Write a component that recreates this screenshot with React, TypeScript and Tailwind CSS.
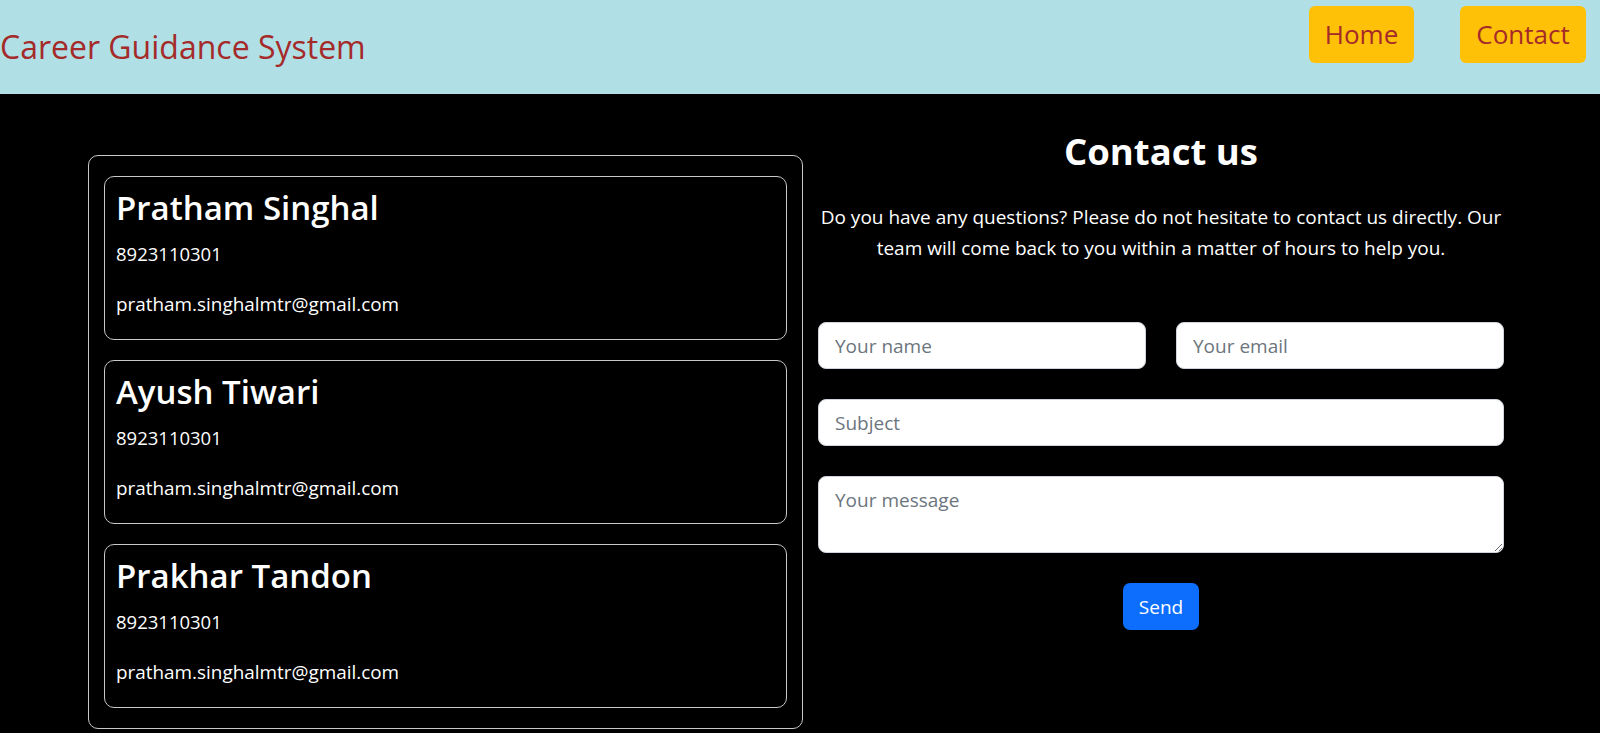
import React from 'react';

interface Member {
  name: string;
  phone: string;
  email: string;
}

const members: Member[] = [
  { name: 'Pratham Singhal', phone: '8923110301', email: 'pratham.singhalmtr@gmail.com' },
  { name: 'Ayush Tiwari', phone: '8923110301', email: 'pratham.singhalmtr@gmail.com' },
  { name: 'Prakhar Tandon', phone: '8923110301', email: 'pratham.singhalmtr@gmail.com' },
];

const MemberCard: React.FC<{ member: Member }> = ({ member }) => (
  <div className="h-[164px] border border-[#c8c8c8] rounded-[10px] px-[11px] pt-[11px] text-white">
    <h2 className="text-[33px] leading-[40px] font-semibold">{member.name}</h2>
    <p className="mt-[12px] text-[18.5px] leading-[28px]">{member.phone}</p>
    <p className="mt-[22px] text-[18.9px] leading-[28px]">{member.email}</p>
  </div>
);

const inputClass =
  'w-full h-[47px] bg-white rounded-[8px] border border-[#ced4da] px-4 text-[19px] text-[#212529] placeholder:text-[#6c757d] outline-none';

const App: React.FC = () => {
  return (
    <div className="min-h-screen bg-black font-['Open_Sans',sans-serif]">
      {/* Navbar */}
      <nav className="h-[94px] bg-[#b0e0e6] flex items-start justify-between">
        <span className="mt-[27px] text-[32px] leading-[40px] text-[#a52a2a]">Career Guidance System</span>
        <div className="flex items-start gap-[46px] mt-[6px] mr-[14px]">
          <button className="w-[105px] h-[57px] rounded-[6px] bg-[#ffc107] text-[#a52a2a] text-[26px]">Home</button>
          <button className="w-[126px] h-[57px] rounded-[6px] bg-[#ffc107] text-[#a52a2a] text-[26px]">Contact</button>
        </div>
      </nav>

      {/* Main */}
      <div className="flex items-start pl-[88px] pb-[5px]">
        {/* Team cards */}
        <div className="mt-[61px] w-[715px] border border-[#c8c8c8] rounded-[10px] px-[15px] py-[20px] flex flex-col gap-[20px]">
          {members.map((m) => (
            <MemberCard key={m.name} member={m} />
          ))}
        </div>

        {/* Contact form */}
        <div className="ml-[15px] w-[686px] mt-[35px] text-white">
          <h2 className="text-center text-[36.5px] leading-[44px] font-bold">Contact us</h2>
          <p className="mt-[29px] text-center text-[19px] leading-[31px]">
            Do you have any questions? Please do not hesitate to contact us directly. Our team will come back to
            you within a matter of hours to help you.
          </p>

          <form className="mt-[58px] flex flex-col gap-[30px]" onSubmit={(e) => e.preventDefault()}>
            <div className="grid grid-cols-2 gap-[30px]">
              <input type="text" placeholder="Your name" className={inputClass} />
              <input type="email" placeholder="Your email" className={inputClass} />
            </div>
            <input type="text" placeholder="Subject" className={inputClass} />
            <textarea
              placeholder="Your message"
              className="w-full h-[77px] bg-white rounded-[8px] border border-[#ced4da] px-4 py-[9px] text-[19px] leading-[1.5] text-[#212529] placeholder:text-[#6c757d] outline-none"
            />
            <div className="flex justify-center">
              <button
                type="submit"
                className="h-[47px] px-4 pt-[2px] rounded-[7px] bg-[#0d6efd] text-white text-[19px]"
              >
                Send
              </button>
            </div>
          </form>
        </div>
      </div>
    </div>
  );
};

export default App;
